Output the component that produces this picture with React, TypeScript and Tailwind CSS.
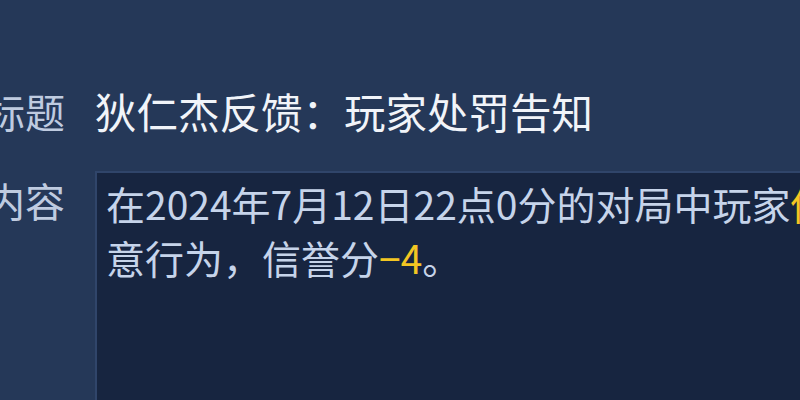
export default function App() {
  return (
    <div
      className="w-[800px] h-[400px] overflow-hidden bg-[#253858] pt-[83px]"
      style={{ fontFamily: '"Noto Sans CJK SC", "Noto Sans", sans-serif' }}
    >
      <div className="grid grid-cols-[65px_1fr] gap-x-[30px] gap-y-[32px]">
        {/* 标题 */}
        <div className="flex justify-end whitespace-nowrap text-[40px] leading-[56px] text-[#bfcbe0]">
          标题
        </div>
        <div className="whitespace-nowrap text-[41.5px] leading-[56px] text-[#f1f4f9]">
          狄仁杰反馈：玩家处罚告知
        </div>

        {/* 内容 */}
        <div className="flex justify-end whitespace-nowrap pt-[1px] text-[40px] leading-[56px] text-[#bfcbe0]">
          内容
        </div>
        <div className="w-[1000px] h-[320px] border-t-2 border-l-2 border-[#30456a] bg-[#172540] pl-[9px] pt-[3px]">
          <p className="whitespace-nowrap text-[39px] leading-[54px] text-[#c6d4ea]">
            在2024年7月12日22点0分的对局中玩家<span className="text-[#f3c623]">他乡之客</span>存在恶
            <br />
            意行为，信誉分<span className="text-[#f3c623]">−4</span>。
          </p>
        </div>
      </div>
    </div>
  );
}
